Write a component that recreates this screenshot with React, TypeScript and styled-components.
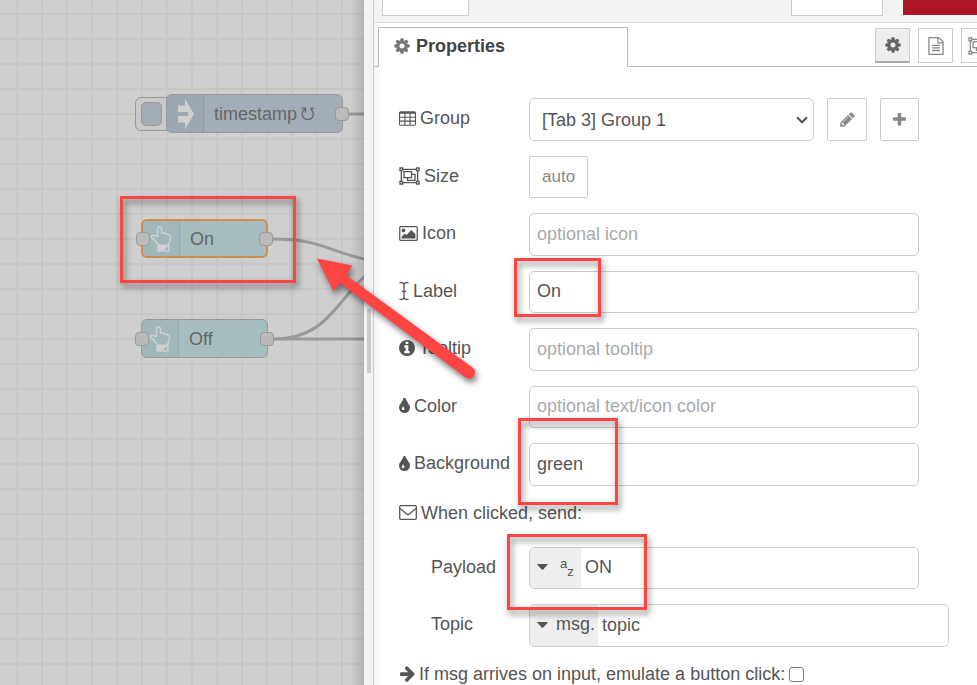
import React, { useState } from "react";
import styled, { createGlobalStyle, css } from "styled-components";

const GlobalStyle = createGlobalStyle`
  *, *::before, *::after { box-sizing: border-box; }
  body {
    margin: 0;
    overflow: hidden;
    background: #fff;
    color: #555;
    font: 18px/20px "Liberation Sans", Arial, sans-serif;
  }
  button, input, select { font: inherit; color: inherit; margin: 0; }
`;

/* ---------- icons ---------- */

const Glyph = styled.svg<{ $w?: number; $h?: number }>`
  display: block;
  flex: none;
  width: ${(p) => p.$w ?? 18}px;
  height: ${(p) => p.$h ?? 18}px;
  fill: currentColor;
`;

const StrokeGlyph = styled(Glyph)`
  fill: none;
  stroke: currentColor;
`;

const CogIcon = () => (
  <Glyph viewBox="0 0 1792 1792" aria-hidden>
    <path d="M1152 896q0-106-75-181t-181-75-181 75-75 181 75 181 181 75 181-75 75-181zm512-109v222q0 12-8 23t-20 13l-185 28q-19 54-39 91 35 50 107 138 10 12 10 25t-9 23q-27 37-99 108t-94 71q-12 0-26-9l-138-108q-44 23-91 38-16 136-29 186-7 28-36 28h-222q-14 0-24.500-8.500t-11.500-21.500l-28-184q-49-16-90-37l-141 107q-10 9-25 9-14 0-25-11-126-114-165-168-7-10-7-23 0-12 8-23 15-21 51-66.500t54-70.500q-27-50-41-99l-183-27q-13-2-21-12.500t-8-23.500v-222q0-12 8-23t19-13l186-28q14-46 39-92-40-57-107-138-10-12-10-24 0-10 9-23 26-36 98.500-107.500t94.500-71.500q13 0 26 10l138 107q44-23 91-38 16-136 29-186 7-28 36-28h222q14 0 24.500 8.500t11.500 21.500l28 184q49 16 90 37l142-107q9-9 24-9 13 0 25 10 129 119 165 170 7 8 7 22 0 12-8 23-15 21-51 66.500t-54 70.500q26 50 41 98l183 28q13 2 21 12.500t8 23.500z" />
  </Glyph>
);

const FileIcon = () => (
  <Glyph viewBox="0 0 1792 1792" aria-hidden>
    <path d="M1596 380q28 28 48 76t20 88v1152q0 40-28 68t-68 28h-1344q-40 0-68-28t-28-68v-1600q0-40 28-68t68-28h896q40 0 88 20t76 48zm-444-244v376h376q-10-29-22-41l-313-313q-12-12-41-22zm384 1528v-1024h-416q-40 0-68-28t-28-68v-416h-768v1536h1280zm-1024-864q0-14 9-23t23-9h704q14 0 23 9t9 23v64q0 14-9 23t-23 9h-704q-14 0-23-9t-9-23v-64zm736 224q14 0 23 9t9 23v64q0 14-9 23t-23 9h-704q-14 0-23-9t-9-23v-64q0-14 9-23t23-9h704zm0 256q14 0 23 9t9 23v64q0 14-9 23t-23 9h-704q-14 0-23-9t-9-23v-64q0-14 9-23t23-9h704z" />
  </Glyph>
);

const ObjectGroupIcon = () => (
  <StrokeGlyph viewBox="0 0 21 18" $w={21} $h={18} strokeWidth="1.3" aria-hidden>
    <path d="M4 2.300H17M4 15.700H17M2.300 4V14M18.700 4V14" />
    <path d="M1 1H3.600V3.600H1zM17.400 1H20V3.600H17.400zM1 14.400H3.600V17H1zM17.400 14.400H20V17H17.400z" />
    <path d="M5 4.700H12.500V10.700H5zM12.500 7.300H16V13.300H8.500V10.700" />
  </StrokeGlyph>
);

const TableIcon = () => (
  <Glyph viewBox="64 128 1664 1408" $w={17} $h={15} aria-hidden>
    <path
      fillRule="evenodd"
      d="M224 128h1344q66 0 113 47t47 113v1088q0 66-47 113t-113 47h-1344q-66 0-113-47t-47-113v-1088q0-66 47-113t113-47zM170 360v290h416v-290zM694 360v290h404v-290zM1206 360v290h416v-290zM170 758v276h416v-276zM694 758v276h404v-276zM1206 758v276h416v-276zM170 1142v290h416v-290zM694 1142v290h404v-290zM1206 1142v290h416v-290z"
    />
  </Glyph>
);

const PictureIcon = () => (
  <Glyph viewBox="-64 128 1920 1536" $w={19} $h={15} aria-hidden>
    <path d="M576 576q0 80-56 136t-136 56-136-56-56-136 56-136 136-56 136 56 56 136zm1024 384v448h-1408v-192l320-320 160 160 512-512zm96-704h-1600q-13 0-22.500 9.500t-9.500 22.500v1216q0 13 9.500 22.500t22.500 9.500h1600q13 0 22.500-9.500t9.500-22.500v-1216q0-13-9.500-22.500t-22.500-9.500zm160 32v1216q0 66-47 113t-113 47h-1600q-66 0-113-47t-47-113v-1216q0-66 47-113t113-47h1600q66 0 113 47t47 113z" />
  </Glyph>
);

const CursorIcon = () => (
  <StrokeGlyph viewBox="0 0 10 18" $w={10} $h={18} strokeWidth="1.300" aria-hidden>
    <path d="M.5 .7H2.500Q5 .7 5 3V15Q5 17.300 2.500 17.300H.5M9.500 .7H7.500Q5 .7 5 3M5 15Q5 17.300 7.500 17.300H9.500M2.800 9.300H7.200" />
  </StrokeGlyph>
);

const InfoIcon = () => (
  <Glyph viewBox="128 128 1536 1536" $w={16} $h={16} aria-hidden>
    <path d="M1152 1376v-160q0-14-9-23t-23-9h-96v-512q0-14-9-23t-23-9h-320q-14 0-23 9t-9 23v160q0 14 9 23t23 9h96v320h-96q-14 0-23 9t-9 23v160q0 14 9 23t23 9h448q14 0 23-9t9-23zm-128-896v-160q0-14-9-23t-23-9h-192q-14 0-23 9t-9 23v160q0 14 9 23t23 9h192q14 0 23-9t9-23zm640 416q0 209-103 385.500t-279.500 279.500-385.500 103-385.500-103-279.500-279.500-103-385.500 103-385.500 279.500-279.500 385.500-103 385.500 103 279.500 279.500 103 385.500z" />
  </Glyph>
);

const DropIcon = () => (
  <Glyph viewBox="384 128 1024 1408" $w={11} $h={15} aria-hidden>
    <path d="M896 1152q0-36-20-69-1-1-15.500-22.500t-25.500-38-25-44-21-50.500q-4-16-21-16t-21 16q-7 23-21 50.500t-25 44-25.500 38-15.500 22.500q-20 33-20 69 0 53 37.500 90.500t90.500 37.500 90.500-37.500 37.500-90.500zm512-128q0 212-150 362t-362 150-362-150-150-362q0-145 81-275 6-9 62.500-90.500t101-151 99.500-178 83-201.500q9-30 34-47t51-17 51.500 17 33.500 47q28 93 83 201.500t99.500 178 101 151 62.500 90.500q81 127 81 275z" />
  </Glyph>
);

const EnvelopeIcon = () => (
  <StrokeGlyph viewBox="0 0 18 15" $w={18} $h={15} strokeWidth="1.300" aria-hidden>
    <rect x=".7" y=".7" width="16.600" height="13.600" rx="1" />
    <path d="M1 3.500L7.300 8.800Q9 10.200 10.700 8.800L17 3.500" />
  </StrokeGlyph>
);

const ArrowIcon = () => (
  <Glyph viewBox="64 150 1536 1600" $w={16} $h={16} aria-hidden>
    <path d="M1600 960q0 54-37 91l-651 651q-39 37-91 37-51 0-90-37l-75-75q-38-38-38-91t38-91l293-293h-704q-52 0-84.500-37.500t-32.500-90.500v-128q0-53 32.500-90.500t84.500-37.500h704l-293-294q-38-36-38-90t38-90l75-75q38-38 90-38 53 0 91 38l651 651q37 35 37 90z" />
  </Glyph>
);

const PencilIcon = () => (
  <Glyph viewBox="0 0 1792 1792" $w={17} $h={17} aria-hidden>
    <path d="M491 1536l91-91-235-235-91 91v107h128v128h107zm523-928q0-22-22-22-10 0-17 7l-542 542q-7 7-7 17 0 22 22 22 10 0 17-7l542-542q7-7 7-17zm-54-192l416 416-832 832h-416v-416zm683 96q0 53-37 90l-166 166-416-416 166-165q36-38 90-38 53 0 91 38l235 234q37 39 37 91z" />
  </Glyph>
);

const PlusIcon = () => (
  <Glyph viewBox="192 192 1408 1408" $w={13} $h={13} aria-hidden>
    <path d="M1600 736v192q0 40-28 68t-68 28h-416v416q0 40-28 68t-68 28h-192q-40 0-68-28t-28-68v-416h-416q-40 0-68-28t-28-68v-192q0-40 28-68t68-28h416v-416q0-40 28-68t68-28h192q40 0 68 28t28 68v416h416q40 0 68 28t28 68z" />
  </Glyph>
);

const CaretIcon = () => (
  <Glyph viewBox="0 0 11 6" $w={11} $h={6} aria-hidden>
    <path d="M.6 0H10.400Q11 .3 10.600 .8L6 5.700Q5.500 6 5 5.700L.4 .8Q0 .3 .6 0z" />
  </Glyph>
);

const HandIcon = () => (
  <StrokeGlyph viewBox="0 0 22 26" $w={22} $h={26} strokeWidth="1.400" aria-hidden>
    <path d="M7.500 10.800V3Q7.500 1 9.500 1T11.500 3V7Q13.500 6.200 14.800 7.600Q16.600 7 17.700 8.700Q20.500 8.200 20.500 11.500Q20.500 15.500 18.800 17.500V19.500H8.500Q8 17.500 6 15.800Q4.500 12.800 2 12.300Q.6 10.800 2 9.600Q5.500 9 7.500 10.800" />
    <path d="M8 19.500H18.800V25H8z" />
    <path d="M9 20.500H16.500Q13.500 24.300 10 24.300H9z" fill="currentColor" />
  </StrokeGlyph>
);

const InjectIcon = () => (
  <Glyph viewBox="0 0 17 30" $w={17} $h={30} aria-hidden>
    <path d="M1 6.500H8V0L17 15L8 30V23.500H1V17H11V13H1z" />
  </Glyph>
);

const RepeatIcon = () => (
  <StrokeGlyph viewBox="0 0 14 14" $w={14} $h={14} strokeWidth="1.300" aria-hidden>
    <path d="M9.700 2.200A5.600 5.600 0 1 1 3.800 2.200M.5 1.200H4.500V5.500M13 1.500H9.500" />
  </StrokeGlyph>
);

/* ---------- flow canvas ---------- */

const Editor = styled.div`
  position: relative;
  display: flex;
  height: 100vh;
  overflow: hidden;
`;

const Canvas = styled.section`
  position: relative;
  flex: 364 1 0;
  min-width: 0;
  overflow: hidden;
  background-color: #cfcfcf;
  background-image: linear-gradient(#c7c7c7 2px, transparent 2px),
    linear-gradient(90deg, #c7c7c7 2px, transparent 2px);
  background-size: 25px 25px;
  background-position: 16px 13px;

  &::after {
    content: "";
    position: absolute;
    inset: 0 0 0 auto;
    width: 14px;
    background: linear-gradient(90deg, transparent, rgba(0, 0, 0, 0.13));
  }
`;

const Wires = styled.svg`
  position: absolute;
  left: 0;
  top: 0;
  width: 100%;
  height: 100%;
  fill: none;
  stroke: #999;
  stroke-width: 3;
`;

type Tone = "inject" | "button";

const Node = styled.div<{ $x: number; $y: number; $w: number; $tone: Tone; $selected?: boolean }>`
  position: absolute;
  left: ${(p) => p.$x}px;
  top: ${(p) => p.$y}px;
  display: flex;
  align-items: center;
  width: ${(p) => p.$w}px;
  height: 39px;
  border: 1px solid #999;
  border-radius: 6px;
  background: ${(p) => (p.$tone === "inject" ? "#a3adb7" : "#a6bdbf")};
  color: #666;
  ${(p) =>
    p.$selected &&
    css`
      border: 2px solid #d08d51;
    `}
`;

const NodeIcon = styled.span`
  display: flex;
  align-items: center;
  justify-content: center;
  align-self: stretch;
  width: 37px;
  border-right: 1px solid rgba(0, 0, 0, 0.08);
  border-radius: 5px 0 0 5px;
  background: rgba(0, 0, 0, 0.03);
  color: #d0d0d0;
`;

const NodeLabel = styled.span`
  display: flex;
  align-items: center;
  gap: 4px;
  padding-left: 10px;
  white-space: nowrap;
`;

const Port = styled.i<{ $side: "left" | "right" }>`
  position: absolute;
  top: 50%;
  ${(p) => p.$side}: -7px;
  width: 14px;
  height: 14px;
  margin-top: -7px;
  border: 1px solid #999;
  border-radius: 4px;
  background: #bababa;
`;

const InjectButton = styled.button`
  position: absolute;
  left: 135px;
  top: 97px;
  display: flex;
  width: 40px;
  height: 34px;
  padding: 4px 5px;
  border: 1px solid #999;
  border-radius: 6px;
  background: #cacaca;

  &::before {
    content: "";
    width: 21px;
    border: 1px solid #999;
    border-radius: 5px;
    background: #a3adb7;
  }
`;

/* ---------- edit tray ---------- */

const Separator = styled.div`
  display: flex;
  align-items: center;
  justify-content: center;
  flex: none;
  width: 10px;
  padding-bottom: 4px;
  border-right: 1px solid #ccc;
  background: #f3f3f3;

  &::before {
    content: "";
    width: 4px;
    height: 64px;
    background: #ccc;
  }
`;

const Tray = styled.main`
  flex: 603 1 0;
  min-width: 0;
  overflow: hidden;
  background: linear-gradient(90deg, #f5f5f5, #fff 8px);
`;

const TrayHeader = styled.header`
  display: flex;
  align-items: flex-start;
  height: 23px;
  padding-left: 8px;
  border-bottom: 1px solid #ddd;
  background: #f3f3f3;
`;

const HeaderButton = styled.button<{ $w: number; $primary?: boolean }>`
  width: ${(p) => p.$w}px;
  height: 16px;
  padding: 0;
  border: 1px solid #ccc;
  border-top: 0;
  background: #fff;
  ${(p) =>
    p.$primary &&
    css`
      height: 15px;
      margin-left: 20px;
      border: 0;
      background: #ad1625;
    `}
`;

const Spacer = styled.span`
  flex: 1;
`;

const TabBar = styled.div`
  display: flex;
  align-items: flex-start;
  height: 44px;
  padding: 4px 0 0 4px;
  box-shadow: inset 0 -1px #bbb;
`;

const Tab = styled.button`
  display: flex;
  align-items: center;
  gap: 5px;
  width: 250px;
  height: 40px;
  padding: 0 14px 3px;
  border: 1px solid #bbb;
  border-bottom: 0;
  background: #fff;
  color: #444;
  font-weight: bold;

  svg { color: #777; }
`;

const ToolButtons = styled.div`
  display: flex;
  gap: 8px;
  margin: 1px -19px 0 auto;
`;

const ToolButton = styled.button<{ $active?: boolean }>`
  display: flex;
  align-items: center;
  justify-content: center;
  width: 35px;
  height: 35px;
  padding: 0;
  border: 1px solid #ccc;
  background: #fff;
  color: #888;
  ${(p) =>
    p.$active &&
    css`
      border-bottom: 2px solid #aaa;
      background: #eee;
      color: #666;
    `}
`;

const control = css`
  border: 1px solid #ccc;
  border-radius: 5px;
  background: #fff;
`;

const TextBox = styled.input`
  ${control}
  flex: 1;
  min-width: 0;
  height: 43px;
  padding: 0 7px;

  &::placeholder { color: #aaa; opacity: 1; }
`;

const Form = styled.form`
  display: flex;
  flex-direction: column;
  gap: 15px;
  padding: 31px 58px 0 25px;

  > :nth-child(even) ${TextBox} {
    height: 42px;
    padding-bottom: 2px;
  }
`;

const Row = styled.div<{ $wide?: boolean }>`
  display: flex;
  align-items: center;
  margin-right: ${(p) => (p.$wide ? -30 : 0)}px;
`;

const Label = styled.label<{ $indent?: boolean }>`
  display: flex;
  align-items: center;
  flex: none;
  gap: 4px;
  width: 130px;
  padding-bottom: 3px;
  padding-left: ${(p) => (p.$indent ? 32 : 0)}px;
  white-space: nowrap;
`;

const SectionLabel = styled.div`
  display: flex;
  align-items: center;
  gap: 4px;
  height: 31px;
  padding-bottom: 8px;
`;

const CheckRow = styled.label`
  display: flex;
  align-items: center;
  gap: 4px;
  height: 24px;
  white-space: nowrap;
`;

const Checkbox = styled.input`
  appearance: none;
  width: 15px;
  height: 15px;
  border: 1px solid #767676;
  border-radius: 3px;
  background: #fff;

  &:checked { background: #555; }
`;

const SelectWrap = styled.div`
  display: grid;
  flex: 1;
  align-items: center;
  min-width: 0;

  > * { grid-area: 1 / 1; }
  svg {
    justify-self: end;
    margin-right: 6px;
    pointer-events: none;
  }
`;

const Select = styled.select`
  ${control}
  appearance: none;
  width: 100%;
  height: 43px;
  padding: 0 24px 0 12px;
`;

const SquareButton = styled.button<{ $w: number }>`
  display: flex;
  align-items: center;
  justify-content: center;
  flex: none;
  width: ${(p) => p.$w}px;
  height: 43px;
  margin-left: 13px;
  padding: 0;
  border: 1px solid #ccc;
  border-radius: 2px;
  background: #fff;
  color: #888;
`;

const SizeButton = styled.button`
  height: 42px;
  padding: 0 12px;
  border: 1px solid #ccc;
  border-radius: 2px;
  background: #fff;
  color: #888;
  font-size: 17px;
`;

const TypedBox = styled.div<{ $h: number }>`
  ${control}
  display: flex;
  flex: 1;
  min-width: 0;
  height: ${(p) => p.$h}px;
  overflow: hidden;
`;

const TypeButton = styled.button<{ $gap: number }>`
  display: flex;
  align-items: center;
  gap: ${(p) => p.$gap}px;
  padding: 0 3px 2px 7px;
  border: 0;
  background: #eee;
`;

const TypeName = styled.span`
  padding-bottom: 2px;
`;

const AlphaMark = styled.span`
  display: flex;
  align-items: flex-start;
  width: 18px;
  font-size: 13px;
  line-height: 15px;

  sup, sub {
    font-size: inherit;
    line-height: inherit;
    vertical-align: baseline;
  }
  sub { padding-top: 8px; }
`;

const TypedInput = styled.input`
  flex: 1;
  min-width: 0;
  padding: 0 4px 2px;
  border: 0;
  background: transparent;
`;

/* ---------- callouts ---------- */

const Callout = styled.div<{ $x: number; $y: number; $w: number; $h: number }>`
  position: absolute;
  left: ${(p) => p.$x}px;
  top: ${(p) => p.$y}px;
  width: ${(p) => p.$w}px;
  height: ${(p) => p.$h}px;
  border: 3px solid #ff4444;
  filter: drop-shadow(2px 4px 3px rgba(0, 0, 0, 0.5));
  pointer-events: none;
`;

const CalloutArrow = styled.svg`
  position: absolute;
  left: 310px;
  top: 250px;
  width: 180px;
  height: 145px;
  fill: #ff4444;
  filter: drop-shadow(2px 4px 3px rgba(0, 0, 0, 0.5));
  pointer-events: none;
`;

interface FieldProps {
  id: string;
  label: string;
  icon: React.ReactNode;
  initial?: string;
  placeholder?: string;
}

const Field = ({ id, label, icon, initial = "", placeholder }: FieldProps) => {
  const [value, setValue] = useState(initial);
  return (
    <Row>
      <Label htmlFor={id}>{icon}{label}</Label>
      <TextBox id={id} value={value} placeholder={placeholder} onChange={(e) => setValue(e.target.value)} />
    </Row>
  );
};

export default function App() {
  return (
    <>
      <GlobalStyle />
      <Editor>
        <Canvas aria-label="Flow">
          <Wires aria-hidden>
            <path d="M348 114H400M273 239C319 239 326 250 364 259C380 263 390 264 410 264M273 339C325 339 334 305 364 277L380 262M273 339H400" />
          </Wires>
          <InjectButton type="button" aria-label="Inject" />
          <Node $x={166} $y={94} $w={177} $tone="inject">
            <NodeIcon><InjectIcon /></NodeIcon>
            <NodeLabel>timestamp<RepeatIcon /></NodeLabel>
            <Port $side="right" />
          </Node>
          <Node $x={141} $y={219} $w={127} $tone="button" $selected>
            <NodeIcon><HandIcon /></NodeIcon>
            <NodeLabel>On</NodeLabel>
            <Port $side="left" />
            <Port $side="right" />
          </Node>
          <Node $x={141} $y={319} $w={127} $tone="button">
            <NodeIcon><HandIcon /></NodeIcon>
            <NodeLabel>Off</NodeLabel>
            <Port $side="left" />
            <Port $side="right" />
          </Node>
        </Canvas>

        <Separator />

        <Tray>
          <TrayHeader>
            <HeaderButton type="button" $w={87} aria-label="Delete" />
            <Spacer />
            <HeaderButton type="button" $w={92} aria-label="Cancel" />
            <HeaderButton type="button" $w={74} $primary aria-label="Done" />
          </TrayHeader>

          <TabBar>
            <Tab type="button"><CogIcon />Properties</Tab>
            <ToolButtons>
              <ToolButton type="button" $active aria-label="Properties"><CogIcon /></ToolButton>
              <ToolButton type="button" aria-label="Description"><FileIcon /></ToolButton>
              <ToolButton type="button" aria-label="Appearance"><ObjectGroupIcon /></ToolButton>
            </ToolButtons>
          </TabBar>

          <Form onSubmit={(e) => e.preventDefault()}>
            <Row>
              <Label htmlFor="group"><TableIcon />Group</Label>
              <SelectWrap>
                <Select id="group"><option>[Tab 3] Group 1</option></Select>
                <StrokeGlyph viewBox="0 0 12 8" $w={12} $h={8} strokeWidth="2" aria-hidden>
                  <path d="M1 1.300L6 6.300L11 1.300" />
                </StrokeGlyph>
              </SelectWrap>
              <SquareButton type="button" $w={40} aria-label="Edit group"><PencilIcon /></SquareButton>
              <SquareButton type="button" $w={39} aria-label="Add group"><PlusIcon /></SquareButton>
            </Row>
            <Row>
              <Label htmlFor="size"><ObjectGroupIcon />Size</Label>
              <SizeButton id="size" type="button">auto</SizeButton>
            </Row>
            <Field id="icon" label="Icon" icon={<PictureIcon />} placeholder="optional icon" />
            <Field id="label" label="Label" icon={<CursorIcon />} initial="On" />
            <Field id="tooltip" label="Tooltip" icon={<InfoIcon />} placeholder="optional tooltip" />
            <Field id="color" label="Color" icon={<DropIcon />} placeholder="optional text/icon color" />
            <Field id="background" label="Background" icon={<DropIcon />} initial="green" />
            <SectionLabel><EnvelopeIcon />When clicked, send:</SectionLabel>
            <Row>
              <Label htmlFor="payload" $indent>Payload</Label>
              <TypedBox $h={42}>
                <TypeButton type="button" $gap={12} aria-label="Payload type: string">
                  <CaretIcon />
                  <AlphaMark><sup>a</sup><sub>z</sub></AlphaMark>
                </TypeButton>
                <TypedInput id="payload" defaultValue="ON" />
              </TypedBox>
            </Row>
            <Row $wide>
              <Label htmlFor="topic" $indent>Topic</Label>
              <TypedBox $h={43}>
                <TypeButton type="button" $gap={8} aria-label="Topic type: msg">
                  <CaretIcon />
                  <TypeName>msg.</TypeName>
                </TypeButton>
                <TypedInput id="topic" defaultValue="topic" />
              </TypedBox>
            </Row>
            <CheckRow>
              <ArrowIcon />
              If msg arrives on input, emulate a button click:
              <Checkbox type="checkbox" />
            </CheckRow>
          </Form>
        </Tray>

        <Callout $x={120} $y={196} $w={176} $h={87} />
        <Callout $x={514} $y={258} $w={87} $h={59} />
        <Callout $x={518} $y={418} $w={100} $h={87} />
        <Callout $x={507} $y={534} $w={140} $h={76} />
        <CalloutArrow viewBox="310 250 180 145" aria-hidden>
          <path d="M317 258.500L352.500 265.500L346 275L472.500 367.500A6 6 0 0 1 465.500 377.500L340 283L333.500 291.500Z" />
        </CalloutArrow>
      </Editor>
    </>
  );
}
